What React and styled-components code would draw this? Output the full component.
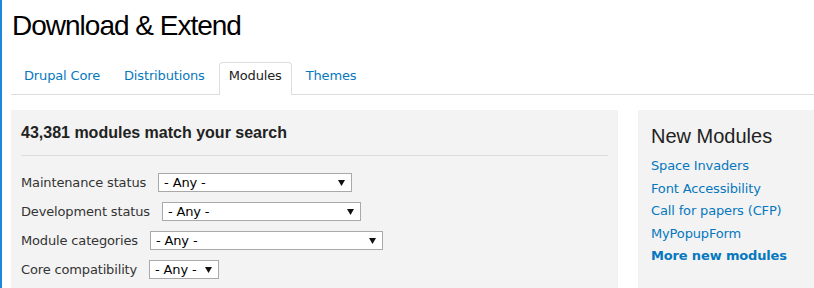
import React from 'react';
import styled, { createGlobalStyle } from 'styled-components';

const GlobalStyle = createGlobalStyle`
  html, body {
    margin: 0;
    padding: 0;
    background: #fff;
    overflow: hidden;
  }
  body {
    font-family: 'DejaVu Sans', Verdana, sans-serif;
    font-size: 13px;
    letter-spacing: -0.15px;
    color: #333;
  }
`;

const Page = styled.div`
  width: 814px;
  height: 288px;
  box-sizing: border-box;
  border-left: 2px solid #1d87dc;
  padding-left: 9px;
  overflow: hidden;
`;

const Title = styled.h1`
  margin: 10px 0 0 1px;
  font-family: 'Liberation Sans', Arial, sans-serif;
  font-weight: normal;
  font-size: 28px;
  line-height: 32px;
  letter-spacing: -1px;
  color: #000;
`;

const Tabs = styled.ul`
  display: flex;
  gap: 4px;
  list-style: none;
  margin: 20px 0 0;
  padding: 0 0 0 3px;
  border-bottom: 1px solid #ddd;
`;

const Tab = styled.li`
  padding: 3px 9px 9px;
  line-height: 20px;
  border: 1px solid ${(p) => (p.$active ? '#ddd' : 'transparent')};
  border-bottom: none;
  border-radius: 4px 4px 0 0;
  margin-bottom: -1px;
  background: ${(p) => (p.$active ? '#fff' : 'transparent')};
  color: ${(p) => (p.$active ? '#222' : '#0678be')};
  white-space: nowrap;
`;

const Columns = styled.div`
  display: flex;
  gap: 20px;
  margin-top: 15px;
`;

const SearchPanel = styled.section`
  width: 607px;
  height: 200px;
  box-sizing: border-box;
  padding: 13px 10px;
  background: #f3f3f3;
`;

const ResultCount = styled.h2`
  margin: 0;
  font-family: 'Liberation Sans', Arial, sans-serif;
  font-weight: bold;
  font-size: 16px;
  line-height: 20px;
  letter-spacing: 0;
  color: #222;
`;

const Rule = styled.hr`
  margin: 12px 0 17px;
  border: none;
  border-top: 1px solid #dcdcdc;
`;

const FilterRow = styled.div`
  display: flex;
  align-items: center;
  gap: 12px;
  height: 19px;
  margin-bottom: 10px;
`;

const FilterLabel = styled.label`
  color: #333;
  white-space: nowrap;
`;

const SelectBox = styled.div`
  display: flex;
  align-items: center;
  justify-content: space-between;
  box-sizing: border-box;
  width: ${(p) => p.$width}px;
  height: 19px;
  padding: 0 6px 0 5px;
  background: #fff;
  border: 1px solid #a9a9a9;
  color: #000;
  white-space: nowrap;
`;

const Sidebar = styled.aside`
  flex: 1;
  height: 200px;
  padding: 14px 13px;
  background: #f3f3f3;
`;

const SidebarTitle = styled.h3`
  margin: 0 0 7px;
  font-family: 'Liberation Sans', Arial, sans-serif;
  font-weight: normal;
  font-size: 20px;
  line-height: 24px;
  letter-spacing: 0;
  color: #222;
`;

const LinkList = styled.ul`
  list-style: none;
  margin: 0;
  padding: 0;
`;

const LinkItem = styled.li`
  line-height: 22.6px;
  color: #0678be;
  font-weight: ${(p) => (p.$strong ? 'bold' : 'normal')};
  white-space: nowrap;
`;

const Arrow = () => (
  <svg width="7" height="6" viewBox="0 0 7 6">
    <path d="M0 0h7L3.5 6z" fill="#111" />
  </svg>
);

const filters = [
  { label: 'Maintenance status', width: 194 },
  { label: 'Development status', width: 199 },
  { label: 'Module categories', width: 233 },
  { label: 'Core compatibility', width: 70 },
];

const newModules = ['Space Invaders', 'Font Accessibility', 'Call for papers (CFP)', 'MyPopupForm'];

export default function App() {
  return (
    <>
      <GlobalStyle />
      <Page>
        <Title>Download &amp; Extend</Title>
        <Tabs>
          <Tab>Drupal Core</Tab>
          <Tab>Distributions</Tab>
          <Tab $active>Modules</Tab>
          <Tab>Themes</Tab>
        </Tabs>
        <Columns>
          <SearchPanel>
            <ResultCount>43,381 modules match your search</ResultCount>
            <Rule />
            {filters.map((f) => (
              <FilterRow key={f.label}>
                <FilterLabel>{f.label}</FilterLabel>
                <SelectBox $width={f.width}>
                  <span>- Any -</span>
                  <Arrow />
                </SelectBox>
              </FilterRow>
            ))}
          </SearchPanel>
          <Sidebar>
            <SidebarTitle>New Modules</SidebarTitle>
            <LinkList>
              {newModules.map((m) => (
                <LinkItem key={m}>{m}</LinkItem>
              ))}
              <LinkItem $strong>More new modules</LinkItem>
            </LinkList>
          </Sidebar>
        </Columns>
      </Page>
    </>
  );
}
